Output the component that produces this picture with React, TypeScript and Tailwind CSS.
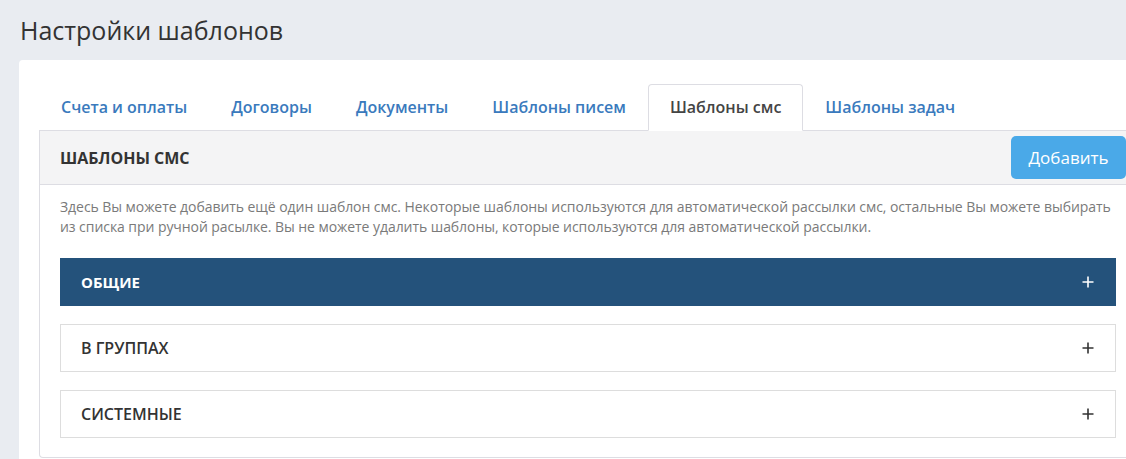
import React from "react";

const tabs = ["Счета и оплаты", "Договоры", "Документы", "Шаблоны писем", "Шаблоны смс", "Шаблоны задач"];
const active = "Шаблоны смс";

function Plus({ color }: { color: string }) {
  return (
    <svg width="12" height="12" viewBox="0 0 12 12" className="shrink-0">
      <path d="M6 0.5V11.5M0.5 6H11.5" stroke={color} strokeWidth="1.6" />
    </svg>
  );
}

export default function App() {
  return (
    <div className="w-[1126px] h-[459px] overflow-hidden bg-[#e9ecf1] font-['Open_Sans',sans-serif]">
      <h1 className="pl-5 pt-[13px] text-[25px] leading-[34px] text-[#333]">Настройки шаблонов</h1>
      <div className="ml-[19px] mt-[13px] w-[1138px] bg-white rounded-[4px] px-5 pt-6 pb-5">
        <div className="flex border-b border-[#dddde3]">
          {tabs.map((t) => (
            <div
              key={t}
              className={
                t === active
                  ? "-mb-px px-[21px] py-[10px] text-[16px] leading-[25px] font-semibold text-[#444] bg-white border border-[#dddde3] border-b-white rounded-t-[4px]"
                  : "-mb-px px-[21px] py-[10px] text-[16px] leading-[25px] font-semibold text-[#3a7abd] border border-transparent"
              }
            >
              {t}
            </div>
          ))}
        </div>
        <div className="border border-t-0 border-[#dddde3] rounded-b-[4px]">
          <div className="flex items-center justify-between bg-[#f4f4f5] border-b border-[#dddde3] pl-5 pr-[10px] py-[5px]">
            <div className="text-[16px] font-bold text-[#333] uppercase">Шаблоны смс</div>
            <button className="h-[43px] w-[115px] rounded-[5px] bg-[#4aa9e8] text-white text-[17px]">Добавить</button>
          </div>
          <div className="px-5 pt-3 pb-[19px]">
            <p className="text-[14px] leading-5 tracking-[-0.06px] text-[#7a7a7a]">
              Здесь Вы можете добавить ещё один шаблон смс. Некоторые шаблоны используются для автоматической рассылки смс, остальные Вы можете выбирать из списка при ручной расылке. Вы не можете удалить шаблоны, которые используются для автоматической рассылки.
            </p>
            <div className="mt-[21px] flex flex-col gap-[18px]">
              <div className="h-[48px] flex items-center justify-between bg-[#24527b] border border-[#24527b] pl-5 pr-[21px]">
                <span className="text-[15px] font-bold text-white">ОБЩИЕ</span>
                <Plus color="#ffffff" />
              </div>
              <div className="h-[48px] flex items-center justify-between bg-white border border-[#dddddd] pl-5 pr-[21px]">
                <span className="text-[16px] font-semibold text-[#333]">В ГРУППАХ</span>
                <Plus color="#333333" />
              </div>
              <div className="h-[48px] flex items-center justify-between bg-white border border-[#dddddd] pl-5 pr-[21px]">
                <span className="text-[16px] font-semibold text-[#333]">СИСТЕМНЫЕ</span>
                <Plus color="#333333" />
              </div>
            </div>
          </div>
        </div>
      </div>
    </div>
  );
}
